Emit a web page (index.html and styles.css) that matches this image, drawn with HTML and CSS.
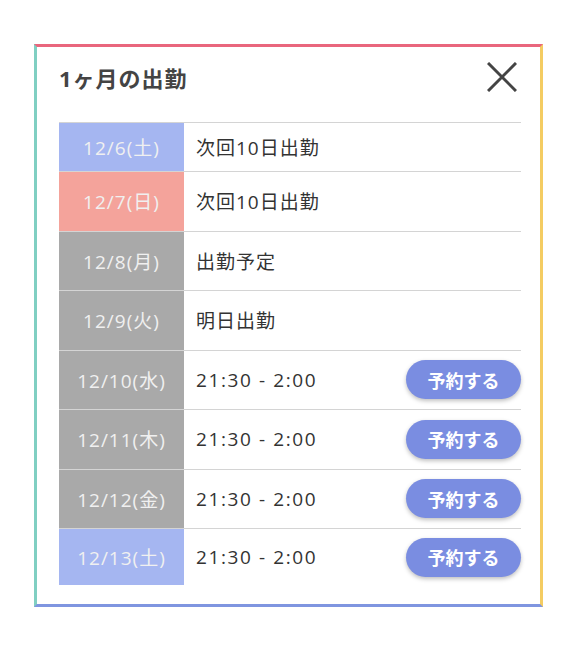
FILE: index.html
```html
<!DOCTYPE html>
<html lang="ja">
<head>
<meta charset="UTF-8">
<meta name="viewport" content="width=device-width, initial-scale=1.0">
<title>1ヶ月の出勤</title>
<link rel="stylesheet" href="styles.css">
</head>
<body>
<div class="modal">
    <div class="modal-header">
        <h2 class="modal-title">1ヶ月の出勤</h2>
        <button type="button" class="close-btn" aria-label="閉じる">
            <svg width="30" height="30" viewBox="0 0 30 30"><path d="M1 1 L29 29 M29 1 L1 29" stroke="#444" stroke-width="3" fill="none"/></svg>
        </button>
    </div>
    <div class="schedule">
        <div class="row row-first">
            <div class="date sat">12/6(土)</div>
            <div class="info">次回10日出勤</div>
        </div>
        <div class="row">
            <div class="date sun">12/7(日)</div>
            <div class="info">次回10日出勤</div>
        </div>
        <div class="row">
            <div class="date">12/8(月)</div>
            <div class="info">出勤予定</div>
        </div>
        <div class="row">
            <div class="date">12/9(火)</div>
            <div class="info">明日出勤</div>
        </div>
        <div class="row">
            <div class="date">12/10(水)</div>
            <div class="info"><span class="time">21:30 - 2:00</span><button type="button" class="reserve">予約する</button></div>
        </div>
        <div class="row">
            <div class="date">12/11(木)</div>
            <div class="info"><span class="time">21:30 - 2:00</span><button type="button" class="reserve">予約する</button></div>
        </div>
        <div class="row">
            <div class="date">12/12(金)</div>
            <div class="info"><span class="time">21:30 - 2:00</span><button type="button" class="reserve">予約する</button></div>
        </div>
        <div class="row row-last">
            <div class="date sat">12/13(土)</div>
            <div class="info"><span class="time">21:30 - 2:00</span><button type="button" class="reserve">予約する</button></div>
        </div>
    </div>
</div>
</body>
</html>
```

FILE: styles.css
```css
body {
    margin: 0;
    padding: 0;
    background-color: white;
    font-family: "Open Sans", "Noto Sans CJK JP", sans-serif;
    color: #333;
}

.modal {
    box-sizing: border-box;
    width: 509px;
    height: 563px;
    margin: 44px 0 0 34px;
    padding: 15px 19px 18px 22px;
    background-color: white;
    border-style: solid;
    border-width: 3px;
    border-top-color: #e9667d;
    border-left-color: #80cfc2;
    border-right-color: #f4cc62;
    border-bottom-color: #7f95e0;
}

.modal-header {
    display: flex;
    align-items: center;
    justify-content: space-between;
    height: 30px;
    margin-bottom: 30px;
}

.modal-title {
    margin: 0;
    font-size: 22px;
    font-weight: bold;
    letter-spacing: 1px;
    color: #444;
}

.close-btn {
    width: 30px;
    height: 30px;
    padding: 0;
    margin-right: 4px;
    border: none;
    background: none;
    cursor: pointer;
}

.close-btn svg {
    display: block;
}

.row {
    box-sizing: border-box;
    display: grid;
    grid-template-columns: 125px 1fr;
    height: 59.5px;
    border-top: 1px solid #d4d4d4;
}

.row-first {
    height: 49px;
}

.row-last {
    height: 57px;
}

.date {
    display: flex;
    align-items: center;
    justify-content: center;
    background-color: #a9a9a9;
    color: #f0f0f0;
    font-size: 19px;
    letter-spacing: 1px;
}

.date.sat {
    background-color: #a5b6f1;
}

.date.sun {
    background-color: #f4a39b;
}

.info {
    display: flex;
    align-items: center;
    justify-content: space-between;
    padding-left: 12px;
    font-size: 19px;
    letter-spacing: 1px;
}

.time {
    letter-spacing: 1.6px;
}

.reserve {
    width: 115px;
    height: 39px;
    border: none;
    border-radius: 20px;
    background-color: #7a8de1;
    color: white;
    font-family: "Noto Sans CJK JP", sans-serif;
    font-size: 18px;
    font-weight: bold;
    letter-spacing: 0;
    box-shadow: 0 2px 4px rgba(0, 0, 0, 0.25);
    cursor: pointer;
}
```
